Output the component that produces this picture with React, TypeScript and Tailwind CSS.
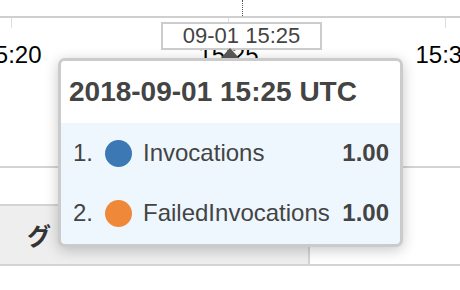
const axisLabels = ['15:20', '15:25', '15:30'];

const rows = [
  { n: '1.', name: 'Invocations', color: 'bg-[#3b78b4]', value: '1.00' },
  { n: '2.', name: 'FailedInvocations', color: 'bg-[#f0883a]', value: '1.00' },
];

export default function App() {
  return (
    <div className="relative w-[460px] h-[290px] overflow-hidden bg-white font-['Liberation_Sans',Arial,sans-serif]">
      {/* chart axis */}
      <div className="relative h-[16px]">
        <div className="absolute left-[242px] top-0 h-[16px] border-l border-dotted border-[#555]" />
      </div>
      <div className="h-[2px] bg-[#cfcfcf]" />
      <div className="flex ml-[-97px]">
        {axisLabels.map(label => (
          <div key={label} className="w-[217px] shrink-0 flex flex-col items-center">
            <div className="w-px h-[10px] bg-[#dddddd]" />
            <div className="mt-[15px] text-[24px] leading-none text-black whitespace-nowrap">{label}</div>
          </div>
        ))}
      </div>

      {/* table below the chart */}
      <div className="mt-[99px] h-[2px] bg-[#d4d4d4]" />
      <div className="h-[36px]" />
      <div className="flex h-[60px]">
        <div className="w-[310px] bg-[#eeeeee] border-t-2 border-r-2 border-[#d4d4d4] flex items-center pl-[27px]">
          <span className="text-[24px] font-bold text-[#333] leading-none font-['Noto_Sans_CJK_JP',sans-serif]">グ</span>
        </div>
        <div className="flex-1" />
      </div>
      <div className="h-[2px] bg-[#d4d4d4]" />

      {/* hover label on the axis */}
      <div className="absolute left-[161px] top-[22px] w-[161px] h-[28px] bg-white border-2 border-[#cccccc] flex items-center justify-center text-[22px] leading-none text-[#444]">
        09-01 15:25
      </div>
      <svg className="absolute left-[220px] top-[48px]" width="20" height="11" viewBox="0 0 20 11">
        <polygon points="10,0 20,11 0,11" fill="#5a5a5a" />
      </svg>

      {/* tooltip */}
      <div className="absolute left-[58px] top-[58px] w-[345px] h-[189px] border-[3px] border-[#cbcbcb] rounded-[7px] overflow-hidden bg-[#eff7fe] shadow-[0_3px_14px_rgba(0,0,0,0.22)]">
        <div className="h-[62px] bg-white flex items-center pl-[8px]">
          <span className="text-[28px] font-bold text-[#444] leading-none">2018-09-01 15:25 UTC</span>
        </div>
        {rows.map(r => (
          <div key={r.n} className="h-[60px] flex items-center pl-[12px] pr-[11px] text-[24px] leading-none text-[#444]">
            <span className="w-[32px] shrink-0">{r.n}</span>
            <span className={`w-[27px] h-[27px] rounded-full shrink-0 ${r.color}`} />
            <span className="ml-[11px] flex-1">{r.name}</span>
            <span className="font-bold">{r.value}</span>
          </div>
        ))}
      </div>
    </div>
  );
}
